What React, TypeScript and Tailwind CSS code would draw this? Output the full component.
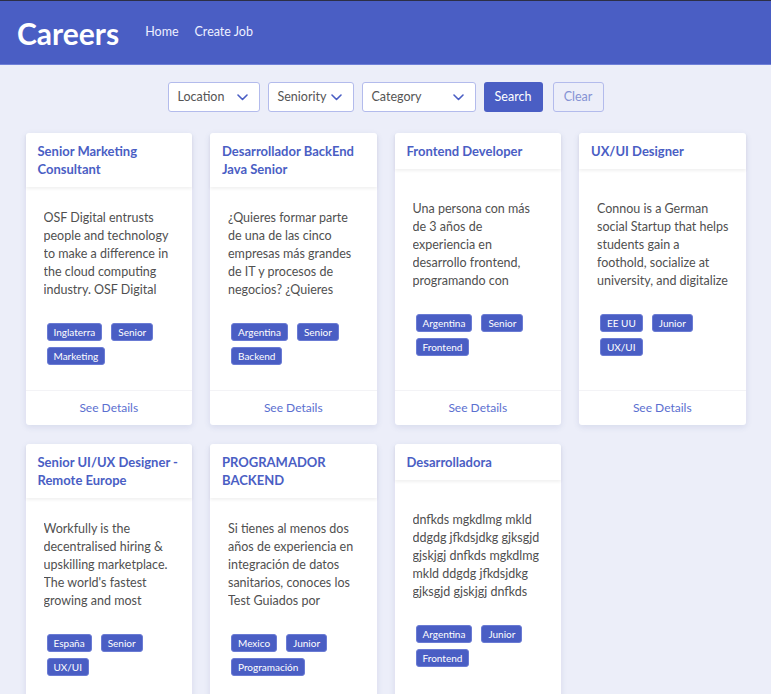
import React from "react";

const jobs = [
  {
    title: "Senior Marketing Consultant",
    summary:
      "OSF Digital entrusts people and technology to make a difference in the cloud computing industry. OSF Digital collaborates",
    tags: ["Inglaterra", "Senior", "Marketing"],
  },
  {
    title: "Desarrollador BackEnd Java Senior",
    summary:
      "¿Quieres formar parte de una de las cinco empresas más grandes de IT y procesos de negocios? ¿Quieres crecer",
    tags: ["Argentina", "Senior", "Backend"],
  },
  {
    title: "Frontend Developer",
    summary:
      "Una persona con más de 3 años de experiencia en desarrollo frontend, programando con JavaScript",
    tags: ["Argentina", "Senior", "Frontend"],
  },
  {
    title: "UX/UI Designer",
    summary:
      "Connou is a German social Startup that helps students gain a foothold, socialize at university, and digitalize their",
    tags: ["EE UU", "Junior", "UX/UI"],
  },
  {
    title: "Senior UI/UX Designer - Remote Europe",
    summary:
      "Workfully is the decentralised hiring & upskilling marketplace. The world's fastest growing and most innovative",
    tags: ["España", "Senior", "UX/UI"],
  },
  {
    title: "PROGRAMADOR BACKEND",
    summary:
      "Si tienes al menos dos años de experiencia en integración de datos sanitarios, conoces los Test Guiados por Comportamiento",
    tags: ["Mexico", "Junior", "Programación"],
  },
  {
    title: "Desarrolladora",
    summary:
      "dnfkds mgkdlmg mkld ddgdg jfkdsjdkg gjksgjd gjskjgj dnfkds mgkdlmg mkld ddgdg jfkdsjdkg gjksgjd gjskjgj dnfkds mgkdlmg",
    tags: ["Argentina", "Junior", "Frontend"],
  },
];

const Chevron = () => (
  <svg width="11" height="7" viewBox="0 0 11 7" fill="none">
    <path d="M1 1l4.5 4.5L10 1" stroke="#4a5ec4" strokeWidth="1.6" strokeLinecap="round" strokeLinejoin="round" />
  </svg>
);

const Select = ({ label, width }: { label: string; width: string }) => (
  <div
    className={`${width} h-[30px] flex items-center justify-between pl-[9px] pr-[11px] bg-white border border-[#b3bbec] rounded-[3px] text-[12.5px] text-[#555]`}
  >
    <span>{label}</span>
    <Chevron />
  </div>
);

const JobCard = ({ job }: { job: (typeof jobs)[number] }) => (
  <div className="flex flex-col bg-white rounded-[3px] shadow-[0_2px_6px_rgba(60,70,140,0.12)]">
    <div className="px-3 py-[9px] shadow-[0_2px_3px_rgba(0,0,0,0.06)] relative">
      <h3 className="text-[13px] leading-[18px] font-bold text-[#4a5ec4]">{job.title}</h3>
    </div>
    <div className="flex-1 flex flex-col justify-center pl-[18px] pr-[17px] pt-[22px] pb-[25px]">
      <p className="h-[90px] overflow-hidden text-[12.5px] leading-[18px] text-[#505050]">{job.summary}</p>
      <div className="mt-[24px] pl-[3px] flex flex-wrap gap-x-[9px] gap-y-[6px]">
        {job.tags.map((tag) => (
          <span
            key={tag}
            className="h-[18px] px-[6px] flex items-center rounded-[3px] bg-[#4a5ec4] border border-[#6a7bd4] text-white text-[10px]"
          >
            {tag}
          </span>
        ))}
      </div>
    </div>
    <div className="h-[35px] flex items-center justify-center border-t border-[#f3f3f6] text-[12px] text-[#5b6fd0]">
      See Details
    </div>
  </div>
);

export default function App() {
  return (
    <div className="min-h-screen bg-[#eceef9] font-['Lato',sans-serif]">
      <header className="h-[65px] bg-[#4a5ec4] border-t border-[#2c2f45] border-b border-b-[#6f80d8] flex items-center pl-[17px]">
        <h1 className="text-[30px] font-bold text-white leading-none">Careers</h1>
        <nav className="flex gap-[16px] ml-[26px] text-[12.5px] text-[#eef0ff]">
          <a>Home</a>
          <a>Create Job</a>
        </nav>
      </header>

      <div className="flex justify-center items-center gap-2 mt-[17px]">
        <Select label="Location" width="w-[92px]" />
        <Select label="Seniority" width="w-[86px]" />
        <Select label="Category" width="w-[114px]" />
        <button className="w-[59px] h-[30px] rounded-[3px] bg-[#4a5ec4] text-white text-[12.5px]">Search</button>
        <button className="w-[51px] h-[30px] ml-[2px] rounded-[3px] border border-[#b3bbec] text-[#8593d4] text-[12.5px]">
          Clear
        </button>
      </div>

      <main className="w-[720px] mx-auto mt-[21px] pb-6 grid grid-cols-4 gap-x-[18px] gap-y-[19px]">
        {jobs.map((job, i) => (
          <JobCard key={i} job={job} />
        ))}
      </main>
    </div>
  );
}
